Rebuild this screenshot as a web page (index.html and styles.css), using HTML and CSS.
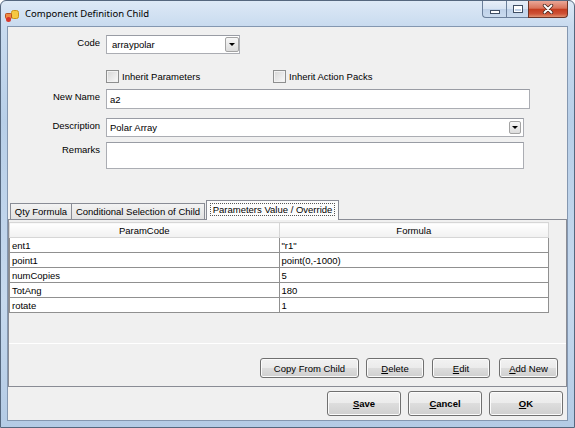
FILE: index.html
```html
<!DOCTYPE html>
<html lang="en">
<head>
  <meta charset="UTF-8">
  <meta name="viewport" content="width=device-width, initial-scale=1.0">
  <title>Component Definition Child</title>
  <link rel="stylesheet" href="styles.css">
</head>
<body>

<div class="window">
  <!-- Title bar -->
  <div class="titlebar">
    <svg class="app-icon" width="16" height="16" viewBox="0 0 16 16">
      <rect x="7.5" y="3.5" width="7" height="8" rx="2" fill="#f5c842" stroke="#c99419"/>
      <rect x="1.5" y="6.5" width="6" height="5" rx="1" fill="#f08a45" stroke="#b9501e"/>
      <circle cx="4.5" cy="12.5" r="2.5" fill="#d8362b"/>
    </svg>
    <span class="title">Component Definition Child</span>
    <div class="caption">
      <span class="cap-btn cap-min"><i></i></span>
      <span class="cap-btn cap-max"><i></i></span>
      <span class="cap-btn cap-close">
        <svg width="12" height="10" viewBox="0 0 12 10">
          <path d="M2.5 1.5 L9.5 8.5 M9.5 1.5 L2.5 8.5" stroke="#4a2a22" stroke-width="3.4" stroke-linecap="round"/>
          <path d="M2.5 1.5 L9.5 8.5 M9.5 1.5 L2.5 8.5" stroke="#ffffff" stroke-width="1.8" stroke-linecap="round"/>
        </svg>
      </span>
    </div>
  </div>

  <div class="client">
    <!-- Header fields -->
    <div class="form-row row-code">
      <label>Code</label>
      <div class="combo combo-code"><span class="value">arraypolar</span><span class="drop"></span></div>
    </div>
    <div class="form-row row-checks">
      <span></span>
      <div class="checks">
        <label class="check check-first"><span class="box"></span>Inherit Parameters</label>
        <label class="check"><span class="box"></span>Inherit Action Packs</label>
      </div>
    </div>
    <div class="form-row row-name">
      <label>New Name</label>
      <div class="textbox textbox-name">a2</div>
    </div>
    <div class="form-row row-desc">
      <label>Description</label>
      <div class="combo combo-desc"><span class="value">Polar Array</span><span class="drop"></span></div>
    </div>
    <div class="form-row row-remarks">
      <label>Remarks</label>
      <div class="textbox textbox-remarks"></div>
    </div>

    <!-- Tabs -->
    <div class="tabs">
      <div class="tab-strip">
        <div class="tab tab-qty">Qty Formula</div>
        <div class="tab tab-cond">Conditional Selection of Child</div>
        <div class="tab tab-active"><span>Parameters Value / Override</span></div>
      </div>
      <div class="tab-panel">
        <div class="grid">
          <table>
            <thead>
              <tr>
                <th>ParamCode</th>
                <th>Formula</th>
              </tr>
            </thead>
            <tbody>
              <tr><td>ent1</td><td>"r1"</td></tr>
              <tr><td>point1</td><td>point(0,-1000)</td></tr>
              <tr><td>numCopies</td><td>5</td></tr>
              <tr><td>TotAng</td><td>180</td></tr>
              <tr><td>rotate</td><td>1</td></tr>
            </tbody>
          </table>
        </div>
        <div class="grid-buttons">
          <button class="btn btn-copy">Copy From Child</button>
          <button class="btn btn-delete"><u>D</u>elete</button>
          <button class="btn btn-edit"><u>E</u>dit</button>
          <button class="btn btn-add"><u>A</u>dd New</button>
        </div>
      </div>
    </div>

    <!-- Dialog buttons -->
    <div class="actions">
      <button class="btn btn-main btn-save"><u>S</u>ave</button>
      <button class="btn btn-main btn-cancel"><u>C</u>ancel</button>
      <button class="btn btn-main btn-ok"><u>O</u>K</button>
    </div>
  </div>
</div>

</body>
</html>
```

FILE: styles.css
```css
body {
  margin: 0;
  font-family: "Liberation Sans", Arial, sans-serif;
  font-size: 9.5px;
  color: #000;
  background: #fff;
}

/* window frame */
.window {
  width: 575px;
  height: 428px;
  box-sizing: border-box;
  border: 1px solid #55677e;
  border-radius: 6px 6px 0 0;
  padding: 0 6px 6px 6px;
  background: linear-gradient(to bottom, #dde9f6 0px, #c9dbef 25px, #b8cfe8 120px, #c6d9ee 300px, #b4cbe5 100%);
  display: flex;
  flex-direction: column;
}
.titlebar {
  height: 25px;
  margin: 0 -6px;
  padding: 0 6px 0 3px;
  display: flex;
  align-items: center;
}
.app-icon {
  flex: none;
  margin-top: 2px;
}
.title {
  margin-left: 5px;
  font-family: "Noto Sans", sans-serif;
  font-size: 9.5px;
  color: #000;
}
.caption {
  margin-left: auto;
  align-self: flex-start;
  display: flex;
}
.cap-btn {
  box-sizing: border-box;
  height: 17px;
  border: 1px solid #6b7f9a;
  border-top: none;
  display: flex;
  align-items: center;
  justify-content: center;
  background: linear-gradient(to bottom, #e8eff8 0%, #d6e3f2 50%, #bfd1e8 51%, #cadbee 100%);
}
.cap-min {
  width: 24px;
  border-right: none;
  border-radius: 0 0 0 4px;
}
.cap-max {
  width: 22px;
  border-right: none;
}
.cap-close {
  width: 40px;
  border-color: #6e3426;
  border-radius: 0 0 4px 0;
  background: linear-gradient(to bottom, #eaa797 0%, #d9735a 45%, #c43d20 52%, #cf5236 80%, #e0906f 100%);
}
.cap-min i {
  width: 8px;
  height: 2px;
  margin-top: 5px;
  background: #fff;
  border: 1px solid #3f4e63;
}
.cap-max i {
  box-sizing: border-box;
  width: 10px;
  height: 8px;
  border: 1px solid #3f4e63;
  box-shadow: inset 0 0 0 1px #fff, inset 0 2px 0 1px #fff;
}

/* client area */
.client {
  flex: 1;
  background: #f0f0f0;
  border: 1px solid #8497b0;
  display: flex;
  flex-direction: column;
}
.form-row {
  display: grid;
  grid-template-columns: 92px 1fr;
  column-gap: 6px;
  align-items: start;
}
.form-row > label {
  text-align: right;
  padding-top: 2px;
  line-height: 11px;
}
.row-code { margin-top: 8px; }
.row-checks { margin-top: 16px; }
.row-name { margin-top: 6px; }
.row-desc { margin-top: 9px; }
.row-remarks { margin-top: 5px; }

.textbox, .combo {
  box-sizing: border-box;
  background: #fff;
  border: 1px solid #abadb3;
  border-top-color: #999ca4;
  display: flex;
  align-items: center;
  padding-left: 4px;
}
.combo-code { width: 134px; height: 19px; padding-left: 5px; }
.textbox-name { width: 424px; height: 20px; padding-left: 3px; }
.combo-desc { width: 418px; height: 19px; padding-left: 3px; }
.textbox-remarks { width: 418px; height: 27px; }
.value { flex: 1; }
.drop {
  box-sizing: border-box;
  width: 14px;
  height: 15px;
  margin-right: 0;
  border: 1px solid #a3a3a3;
  border-radius: 2px;
  background: linear-gradient(#f7f7f7, #dcdcdc);
  display: flex;
  align-items: center;
  justify-content: center;
}
.drop::after {
  content: "";
  border-left: 3px solid transparent;
  border-right: 3px solid transparent;
  border-top: 3px solid #000;
}
.combo-desc .drop {
  width: 12px;
  height: 13px;
  margin-right: 2px;
}

.checks {
  display: flex;
  height: 13px;
}
.check {
  display: flex;
  align-items: center;
}
.check-first { width: 167px; }
.box {
  box-sizing: border-box;
  width: 13px;
  height: 13px;
  margin-right: 3px;
  border: 1px solid #8e8f8f;
  background: linear-gradient(135deg, #d6d6d6, #fafafa);
  box-shadow: inset 0 0 0 1px #f2f2f2;
}

/* tabs */
.tabs { margin-top: 31px; }
.tab-strip {
  display: flex;
  align-items: flex-end;
  height: 19px;
  padding-left: 2px;
  position: relative;
  z-index: 1;
}
.tab {
  box-sizing: border-box;
  height: 16px;
  border: 1px solid #898c95;
  border-bottom: none;
  background: linear-gradient(#f3f3f3, #e2e2e2);
  text-align: center;
  line-height: 15px;
  white-space: nowrap;
}
.tab-qty { width: 62px; }
.tab-cond { width: 134px; margin-left: -1px; }
.tab-active {
  width: 133px;
  height: 20px;
  margin-left: 1px;
  margin-bottom: -1px;
  background: #fcfcfc;
  line-height: 17px;
}
.tab-active span {
  outline: 1px dotted #555;
  padding: 0 2px;
}
.tab-panel {
  height: 168px;
  box-sizing: border-box;
  border: 1px solid #898c95;
  background: #f0f0f0;
}

/* grid */
.grid {
  height: 124px;
  box-sizing: border-box;
  padding-top: 2px;
  border-bottom: 1px solid #fff;
}
table {
  border-collapse: collapse;
  width: 540px;
  table-layout: fixed;
}
th, td {
  height: 14px;
  padding: 0 2px;
  border: 1px solid #909090;
  background: #fff;
  font-weight: normal;
  text-align: left;
  line-height: 13px;
  white-space: nowrap;
}
th {
  text-align: center;
  border-color: #d6d6d6;
  background: linear-gradient(#ffffff, #f1f1f1);
}

/* buttons */
.btn {
  box-sizing: border-box;
  height: 20px;
  padding: 0;
  border: 1px solid #707070;
  border-radius: 3px;
  background: linear-gradient(#f2f2f2 0%, #ebebeb 49%, #dddddd 50%, #cfcfcf 100%);
  box-shadow: inset 0 0 0 1px #fbfbfb;
  font: inherit;
  color: #000;
}
.grid-buttons {
  display: flex;
  justify-content: flex-end;
  margin-top: 14px;
  padding-right: 8px;
}
.btn-copy { width: 99px; }
.btn-delete { width: 58px; margin-left: 7px; }
.btn-edit { width: 58px; margin-left: 8px; }
.btn-add { width: 59px; margin-left: 9px; }

.actions {
  display: flex;
  justify-content: flex-end;
  margin-top: 4px;
  padding-right: 4px;
}
.btn-main {
  width: 74px;
  height: 25px;
  margin-left: 7px;
  font-weight: bold;
}
```
